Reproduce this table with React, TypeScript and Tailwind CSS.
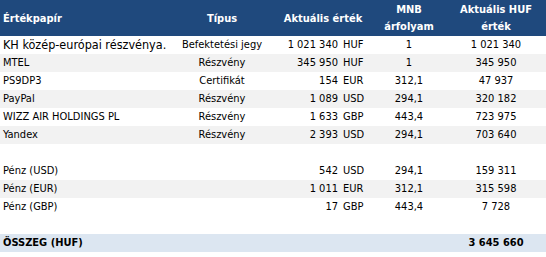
import React from "react";

type Row = {
  name: string;
  type?: string;
  amount?: string;
  cur?: string;
  rate?: string;
  huf?: string;
  gray?: boolean;
  big?: boolean;
};

const rows: (Row | null)[] = [
  { name: "KH közép-európai részvénya.", type: "Befektetési jegy", amount: "1 021 340", cur: "HUF", rate: "1", huf: "1 021 340", big: true },
  { name: "MTEL", type: "Részvény", amount: "345 950", cur: "HUF", rate: "1", huf: "345 950", gray: true },
  { name: "PS9DP3", type: "Certifikát", amount: "154", cur: "EUR", rate: "312,1", huf: "47 937" },
  { name: "PayPal", type: "Részvény", amount: "1 089", cur: "USD", rate: "294,1", huf: "320 182", gray: true },
  { name: "WIZZ AIR HOLDINGS PL", type: "Részvény", amount: "1 633", cur: "GBP", rate: "443,4", huf: "723 975" },
  { name: "Yandex", type: "Részvény", amount: "2 393", cur: "USD", rate: "294,1", huf: "703 640", gray: true },
  null,
  { name: "Pénz (USD)", amount: "542", cur: "USD", rate: "294,1", huf: "159 311" },
  { name: "Pénz (EUR)", amount: "1 011", cur: "EUR", rate: "312,1", huf: "315 598", gray: true },
  { name: "Pénz (GBP)", amount: "17", cur: "GBP", rate: "443,4", huf: "7 728" },
  null,
];

const grid = "grid grid-cols-[170px_104px_66px_32px_74px_100px]";

export default function App() {
  return (
    <div
      className="w-[546px] h-[257px] bg-white text-black text-[11px]"
      style={{ fontFamily: "'DejaVu Sans Condensed', 'DejaVu Sans', sans-serif" }}
    >
      <div className={`${grid} h-[36px] bg-[#1f497d] text-white items-center leading-[17px] font-bold`}>
        <div className="pl-[3px]">Értékpapír</div>
        <div className="text-center">Típus</div>
        <div className="col-span-2 text-center">Aktuális érték</div>
        <div className="text-center">MNB<br />árfolyam</div>
        <div className="text-center">Aktuális HUF<br />érték</div>
      </div>
      {rows.map((r, i) =>
        r === null ? (
          <div key={i} className="h-[18px]" />
        ) : (
          <div key={i} className={`${grid} h-[18px] items-center ${r.gray ? "bg-[#f2f2f2]" : ""}`}>
            <div className={`pl-[3px] whitespace-nowrap ${r.big ? "text-[12.5px]" : ""}`}>{r.name}</div>
            <div className="text-center whitespace-nowrap">{r.type}</div>
            <div className="text-right pr-[2px] whitespace-nowrap">{r.amount}</div>
            <div className="pl-[3px]">{r.cur}</div>
            <div className="text-center">{r.rate}</div>
            <div className="text-center">{r.huf}</div>
          </div>
        )
      )}
      <div className={`${grid} h-[18px] items-center bg-[#dce6f1] font-bold`}>
        <div className="pl-[3px] whitespace-nowrap">ÖSSZEG (HUF)</div>
        <div />
        <div />
        <div />
        <div />
        <div className="text-center">3 645 660</div>
      </div>
    </div>
  );
}
